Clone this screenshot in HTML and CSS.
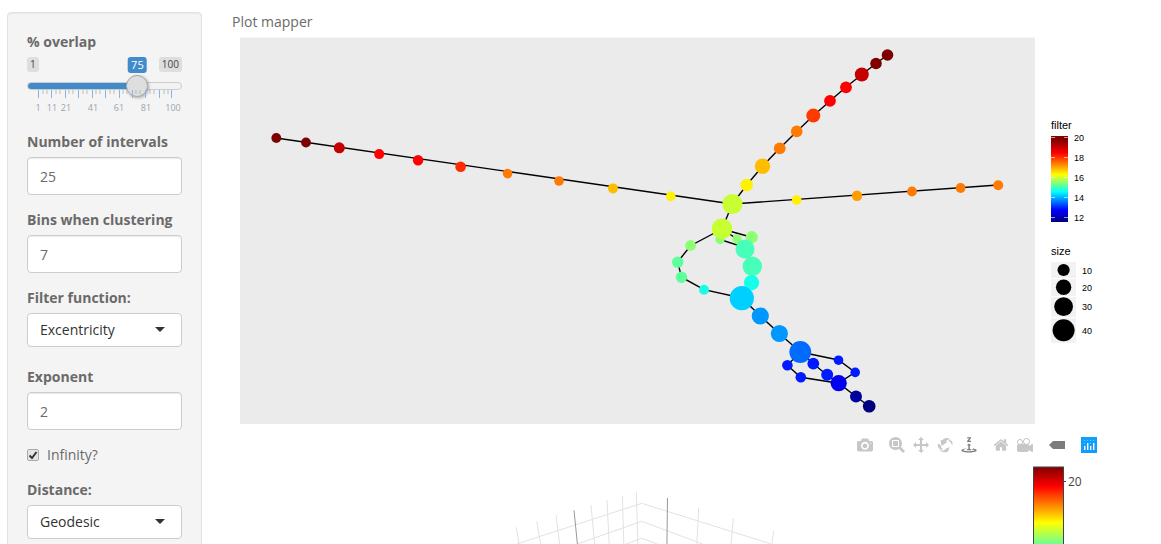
FILE: index.html
```html
<!DOCTYPE html>
<html lang="en">
<head>
<meta charset="utf-8">
<title>Plot mapper</title>
<link rel="stylesheet" href="styles.css">
</head>
<body>
<div class="page">
  <form class="sidebar">
    <div class="field">
      <label for="overlap">% overlap</label>
      <div class="slider">
        <div class="badges">
          <span class="badge">1</span>
          <output class="badge badge-value" for="overlap">75</output>
          <span class="badge">100</span>
        </div>
        <input class="range" id="overlap" type="range" min="1" max="100" value="75">
        <svg class="ticks" viewBox="0 0 155 27">
          <path class="tick-minor" d="M16 0v4M20 0v4M29 0v4M33 0v4M42 0v4M46 0v4M56 0v4M60 0v4M69 0v4M73 0v4M83 0v4M87 0v4M96 0v4M100 0v4M109 0v4M113 0v4M123 0v4M127 0v4M137 0v4M141 0v4" />
          <path class="tick-major" d="M11.500 0v8M24.500 0v8M38.500 0v8M51.500 0v8M65.500 0v8M78.500 0v8M92.500 0v8M105.500 0v8M118.500 0v8M132.500 0v8M144.500 0v8" />
          <g class="tick-text">
            <text x="11" y="21">1</text><text x="25" y="21">11</text><text x="39" y="21">21</text><text x="66" y="21">41</text><text x="92" y="21">61</text><text x="119" y="21">81</text><text x="146" y="21">100</text>
          </g>
        </svg>
      </div>
    </div>
    <div class="field">
      <label for="intervals">Number of intervals</label>
      <input class="text" id="intervals" type="text" inputmode="numeric" value="25">
    </div>
    <div class="field">
      <label for="bins">Bins when clustering</label>
      <input class="text" id="bins" type="text" inputmode="numeric" value="7">
    </div>
    <div class="field field-select">
      <label for="filter">Filter function:</label>
      <div class="select">
        <select id="filter"><option>Excentricity</option></select>
        <svg class="caret" viewBox="0 0 10 5"><path d="M0 0h10L5 5z"/></svg>
      </div>
    </div>
    <div class="field">
      <label for="exponent">Exponent</label>
      <input class="text" id="exponent" type="text" inputmode="numeric" value="2">
    </div>
    <div class="check">
      <span class="tickbox">
        <input id="infinity" type="checkbox" checked>
        <svg viewBox="0 0 12 12"><path d="M2.500 6.500l2.500 2.500L9.500 3" /></svg>
      </span>
      <label for="infinity">Infinity?</label>
    </div>
    <div class="field field-select">
      <label for="distance">Distance:</label>
      <div class="select">
        <select id="distance"><option>Geodesic</option></select>
        <svg class="caret" viewBox="0 0 10 5"><path d="M0 0h10L5 5z"/></svg>
      </div>
    </div>
  </form>

  <main class="main">
    <div class="title">Plot mapper</div>
    <svg class="chart" viewBox="232 32 921 401">
      <defs>
        <linearGradient id="jet" x1="0" y1="0" x2="0" y2="1">
          <stop offset="0" stop-color="#7f0000"/>
          <stop offset=".04" stop-color="#800000"/>
          <stop offset=".2" stop-color="#f00"/>
          <stop offset=".45" stop-color="#ff0"/>
          <stop offset=".65" stop-color="#0ff"/>
          <stop offset=".86" stop-color="#00f"/>
          <stop offset="1" stop-color="#00007f"/>
        </linearGradient>
      </defs>
      <rect x="240" y="37.500" width="795" height="386.500" fill="#ebebeb"/>
      <g class="edges">
        <path d="M276 138L732.300 204L998 185M887.500 55L876 63.500L862 74.500L846 87L830 101L813.300 115.700L796.700 131.500L779.700 148.300L762.500 166.300L746.700 185L732.300 204L722 229"/>
        <path d="M722 229L751.700 237.300L745 249M722 229L737 239L745 249M722 229L720 239.500L745 247.500L752.300 266.300L751.500 282.700L741.800 298"/>
        <path d="M722 229L690.500 245.700L677.700 262L681.500 277.200L704 289.700L741.800 298L760.300 316L779.300 333.500L800.300 352"/>
        <path d="M800.300 352L838.500 360L855 372.300L838.700 383.200M800.300 352L813.300 363.700L827 375L838.700 383.200M800.300 352L787.300 365.300L800.700 377.300L838.700 383.200L856 396.500L869 406.300"/>
      </g>
      <g fill="#7f0000"><circle cx="276.300" cy="138" r="4.900"/><circle cx="306" cy="142.500" r="4.900"/><circle cx="887.500" cy="55" r="5.800"/><circle cx="876" cy="63.500" r="5.800"/></g>
      <g fill="#c40000"><circle cx="339.300" cy="147.800" r="5.500"/><circle cx="861.800" cy="74.500" r="7"/></g>
      <g fill="#f00"><circle cx="379.200" cy="154.100" r="5"/><circle cx="418.100" cy="160.200" r="5.200"/><circle cx="846" cy="87.300" r="5.900"/><circle cx="830" cy="100.800" r="5.900"/></g>
      <g fill="#ff2c00"><circle cx="460.600" cy="166.700" r="5.300"/><circle cx="813.300" cy="115.600" r="7" fill="#ff3a00"/></g>
      <g fill="#ff7a00"><circle cx="507.600" cy="173.600" r="4.800"/><circle cx="559" cy="181" r="4.800"/><circle cx="796.700" cy="131.400" r="5.800"/><circle cx="779.700" cy="148.300" r="5.900"/><circle cx="912" cy="191.500" r="4.900"/><circle cx="960.600" cy="188" r="4.900"/><circle cx="998.200" cy="185.200" r="5"/></g>
      <circle cx="857" cy="195.700" r="5.200" fill="#ff9d00"/>
      <g fill="#ffbd00"><circle cx="613" cy="188.400" r="5"/><circle cx="762.500" cy="166.300" r="7.700"/></g>
      <g fill="#fff200"><circle cx="670.800" cy="196.400" r="4.800"/><circle cx="796.700" cy="200" r="4.800"/><circle cx="746.700" cy="185" r="6.300"/></g>
      <g fill="#8cff73"><circle cx="751.700" cy="237.200" r="6.100"/><circle cx="737" cy="239" r="4.700"/><circle cx="720" cy="239.500" r="4.700"/><circle cx="690.600" cy="245.500" r="5.400"/></g>
      <g fill="#c8ff32"><circle cx="732.400" cy="204" r="10.100"/><circle cx="722" cy="228.700" r="10.300"/></g>
      <g fill="#5cff9c"><circle cx="677.700" cy="262.100" r="5.700"/><circle cx="681.500" cy="277.200" r="5.700"/></g>
      <g fill="#46ffb8"><circle cx="745" cy="249" r="9.500"/><circle cx="752.300" cy="266.300" r="9.700"/></g>
      <g fill="#17ffe8"><circle cx="751.500" cy="282.700" r="7.600"/><circle cx="704" cy="289.700" r="5"/></g>
      <circle cx="741.800" cy="298.200" r="12.100" fill="#00d0ff"/>
      <g fill="#0098ff"><circle cx="760.300" cy="316" r="8.600"/><circle cx="779.400" cy="333.500" r="8.600"/></g>
      <circle cx="800.300" cy="352" r="10.900" fill="#006cff"/>
      <g fill="#001bff"><circle cx="787.400" cy="365.200" r="5.300"/><circle cx="800.800" cy="377.300" r="5.300"/><circle cx="813.300" cy="363.600" r="5.900"/><circle cx="827.200" cy="374.800" r="6"/><circle cx="838.500" cy="360.200" r="4.800"/><circle cx="855.200" cy="372.400" r="4.800"/></g>
      <circle cx="838.700" cy="383.200" r="8.100" fill="#0000f0"/>
      <circle cx="856" cy="396.400" r="6" fill="#0000a0"/>
      <circle cx="869.200" cy="406.300" r="6.300" fill="#00007f"/>

      <text class="legend-title" x="1051" y="129">filter</text>
      <rect x="1051" y="136" width="17" height="86" fill="url(#jet)"/>
      <path class="legend-ticks" d="M1051 137.500h4M1064 137.500h4M1051 157.500h4M1064 157.500h4M1051 177.500h4M1064 177.500h4M1051 197.500h4M1064 197.500h4M1051 217.500h4M1064 217.500h4"/>
      <g class="legend-text">
        <text x="1074" y="141">20</text><text x="1074" y="161">18</text><text x="1074" y="181">16</text><text x="1074" y="201">14</text><text x="1074" y="221">12</text>
      </g>
      <text class="legend-title" x="1051" y="255">size</text>
      <g fill="#f2f2f2"><rect x="1051" y="262" width="25" height="16"/><rect x="1051" y="279" width="25" height="17"/><rect x="1051" y="297" width="25" height="20"/><rect x="1051" y="318" width="25" height="25"/></g>
      <circle cx="1063.600" cy="270" r="6.100"/><circle cx="1063.600" cy="287.300" r="7.700"/><circle cx="1063.600" cy="306.600" r="9.400"/><circle cx="1063.600" cy="330.200" r="11"/>
      <g class="legend-text">
        <text x="1082" y="274">10</text><text x="1082" y="291">20</text><text x="1082" y="310">30</text><text x="1082" y="334">40</text>
      </g>
    </svg>

    <div class="modebar">
      <div class="group">
        <button type="button" aria-label="Download plot"><svg viewBox="0 0 1000 1000"><path transform="matrix(1 0 0 -1 0 850)" d="m500 450c-83 0-150-67-150-150 0-83 67-150 150-150 83 0 150 67 150 150 0 83-67 150-150 150z m400 150h-120c-16 0-34 13-39 29l-31 93c-6 15-23 28-40 28h-340c-16 0-34-13-39-28l-31-94c-6-15-23-28-40-28h-120c-55 0-100-45-100-100v-450c0-55 45-100 100-100h800c55 0 100 45 100 100v450c0 55-45 100-100 100z m-400-550c-138 0-250 112-250 250 0 138 112 250 250 250 138 0 250-112 250-250 0-138-112-250-250-250z m365 380c-19 0-35 16-35 35 0 19 16 35 35 35 19 0 35-16 35-35 0-19-16-35-35-35z"/></svg></button>
      </div>
      <div class="group">
        <button type="button" aria-label="Zoom"><svg viewBox="0 0 1000 1000"><path transform="matrix(1 0 0 -1 0 850)" d="m1000-25l-250 251c40 63 63 138 63 218 0 224-182 406-407 406-224 0-406-182-406-406s183-406 407-406c80 0 155 22 218 62l250-250 125 125z m-812 250l0 438 437 0 0-438-437 0z m62 375l313 0 0-312-313 0 0 312z"/></svg></button>
        <button type="button" aria-label="Pan"><svg viewBox="0 0 1000 1000"><path transform="matrix(1 0 0 -1 0 850)" d="m1000 350l-187 188 0-125-250 0 0 250 125 0-188 187-187-187 125 0 0-250-250 0 0 125-188-188 186-187 0 125 252 0 0-250-125 0 187-188 188 188-125 0 0 250 250 0 0-126 187 188z"/></svg></button>
        <button type="button" aria-label="Orbital rotation"><svg viewBox="0 0 1000 1000"><path transform="matrix(1 0 0 -1 0 850)" d="m922 660c-5 4-9 7-14 11-359 263-580-31-580-31l-102 28 58-400c0 1 1 1 2 2 118 108 351 249 351 249s-62 27-100 42c88 83 222 183 347 122 16-8 30-17 44-27-2 1-4 2-6 4z m36-329c0 0 64 229-88 296-62 27-124 14-175-11 157-78 225-208 249-266 8-19 11-31 11-31 2 5 6 15 11 32-5-13-8-20-8-20z m-775-239c70-31 117-50 198-32-121 80-199 346-199 346l-96-15-58-12c0 0 55-226 155-287z m603 133l-317-139c0 0 4-4 19-14 7-5 24-15 24-15s-177-147-389 4c235-287 536-112 536-112l31-22 100 299-4-1z m-298-153c6-4 14-9 24-15 0 0-17 10-24 15z"/></svg></button>
        <button type="button" class="active" aria-label="Turntable rotation"><svg viewBox="0 0 1000 1000"><path transform="matrix(1 0 0 -1 0 850)" d="m833 5l-17 108v41l-130-65 130-66c0 0 0 38 0 39 0-1 36-14 39-25 4-15-6-22-16-30-15-12-39-16-56-20-90-22-187-23-279-23-261 0-341 34-353 59 3 60 228 110 228 110-140-8-351-35-351-116 0-120 293-142 474-142 155 0 477 22 477 142 0 50-74 79-163 96z m-374 94c-58-5-99-21-99-40 0-24 65-43 144-43 79 0 143 19 143 43 0 19-42 34-98 40v216h87l-132 135-133-135h88v-216z m167 515h-136v1c16 16 31 34 46 52l84 109v54h-230v-71h124v-1c-16-17-28-32-44-51l-89-114v-51h245v72z"/></svg></button>
      </div>
      <div class="group">
        <button type="button" aria-label="Reset camera"><svg viewBox="0 0 929 1000"><path transform="matrix(1 0 0 -1 0 850)" d="m786 296v-267q0-15-11-26t-25-10h-214v214h-143v-214h-214q-15 0-25 10t-11 26v267q0 1 0 2t0 2l321 264 321-264q1-1 1-4z m124 39l-34-41q-5-5-12-6h-2q-7 0-12 3l-386 322-386-322q-7-4-13-4-7 2-12 7l-35 41q-4 5-3 13t6 12l401 334q18 15 42 15t43-15l136-114v109q0 8 5 13t13 5h107q8 0 13-5t5-13v-227l122-102q5-5 6-12t-4-13z"/></svg></button>
        <button type="button" aria-label="Reset camera to last save"><svg viewBox="0 0 1000 1000"><path transform="matrix(1 0 0 -1 0 850)" d="m938 413l-188-125c0 37-17 71-44 94 64 38 107 107 107 187 0 121-98 219-219 219-121 0-219-98-219-219 0-61 25-117 66-156h-115c30 33 49 76 49 125 0 103-84 187-187 187s-188-84-188-187c0-57 26-107 65-141-38-22-65-62-65-109v-250c0-70 56-126 125-126h500c69 0 125 56 125 126l188-126c34 0 62 28 62 63v375c0 35-28 63-62 63z m-750 0c-69 0-125 56-125 125s56 125 125 125 125-56 125-125-56-125-125-125z m406-1c-87 0-157 70-157 157 0 86 70 156 157 156s156-70 156-156-70-157-156-157z"/></svg></button>
      </div>
      <div class="group">
        <button type="button" class="active" aria-label="Toggle hover"><svg viewBox="0 0 1500 1000"><path transform="matrix(1 0 0 -1 0 850)" d="m375 725l0 0-375-375 375-374 0-1 1125 0 0 750-1125 0z"/></svg></button>
      </div>
      <div class="group">
        <a href="#" aria-label="Plot library home"><svg viewBox="0 0 16 16"><path fill="#119dff" d="M0 0h16v16H0z"/><path fill="#fff" d="M3 9h1.400v4H3zM6 6h1.400v7H6zM9 9h1.400v4H9zM12 6h1.400v7H12z"/><path fill="#25fefd" opacity=".75" d="M3 3h1.200v1H3zM6 3h1.200v1H6zM9 3h1.200v1H9zM12 3h1.200v1H12zM3 6h1.200v1H3zM9 6h1.200v1H9z"/></svg></a>
      </div>
    </div>

    <svg class="scene" viewBox="232 460 921 170">
      <defs>
        <linearGradient id="scale" x1="0" y1="0" x2="0" y2="1">
          <stop offset="0" stop-color="#800000"/>
          <stop offset=".125" stop-color="#f00"/>
          <stop offset=".36" stop-color="#ff0"/>
          <stop offset=".6" stop-color="#0ff"/>
          <stop offset=".86" stop-color="#00f"/>
          <stop offset="1" stop-color="#000080"/>
        </linearGradient>
      </defs>
      <g class="grid">
        <path d="M516.300 527.300L525 580M536.700 521.300L547 580M556 515.300L564 580M591 505.300L598 580M607 500.300L611 580M622.300 496L625 580M636.300 491.700L639 580M698.700 507.700L695 580M733.300 518.300L728 580M773.700 531L767 580"/>
        <path d="M516.700 544L641.700 503.300L771.300 544M577.300 544L641.700 521.300L702.700 544M604 552L641.700 538.300L679 552"/>
      </g>
      <path class="axes" d="M574 510.300L581 580M667.500 498L666.500 580"/>
      <rect x="1033.500" y="467" width="30" height="155" fill="url(#scale)" stroke="#444"/>
      <path d="M1064 481.500h2" stroke="#444"/>
      <text class="scale-text" x="1068" y="486">20</text>
    </svg>
  </main>
</div>
</body>
</html>
```
FILE: styles.css
```css
* { box-sizing: border-box; }

body {
  margin: 0;
  height: 100vh;
  overflow: hidden;
  background: #fff;
  color: #6a6a6a;
  font: 14px/20px "Open Sans", "Noto Sans", sans-serif;
}

svg { display: block; }

.page {
  display: flex;
  align-items: flex-start;
  gap: 30px;
  padding: 12px 8px 0 7px;
}

.sidebar {
  flex: 0 0 195px;
  padding: 19px;
  background: #f4f4f4;
  border: 1px solid #e2e2e2;
  border-radius: 4px;
  box-shadow: inset 0 1px 1px rgba(0, 0, 0, .05);
}

.field { margin-bottom: 15px; }
.field-select { margin-bottom: 20px; }

.field > label {
  display: block;
  margin-bottom: 5px;
  font-weight: 700;
}

.text,
.select select {
  display: block;
  width: 100%;
  padding: 0 12px;
  border: 1px solid #ccc;
  border-radius: 4px;
  background: #fff;
  font: inherit;
}

.text {
  height: 38px;
  color: #6a6a6a;
  box-shadow: inset 0 1px 1px rgba(0, 0, 0, .08);
}

.select { position: relative; }

.select select {
  height: 34px;
  color: #333;
  appearance: none;
}

.caret {
  position: absolute;
  top: 14px;
  right: 17px;
  width: 10px;
  fill: #333;
  pointer-events: none;
}

.check {
  display: flex;
  align-items: center;
  gap: 8px;
  margin-bottom: 15px;
}

.tickbox {
  position: relative;
  width: 12px;
  height: 12px;
}

.tickbox input {
  display: block;
  width: 12px;
  height: 12px;
  margin: 0;
  appearance: none;
  border: 1px solid #aaa;
  border-radius: 2px;
  background: #e4e4e4;
}

.tickbox svg {
  position: absolute;
  inset: 0;
  fill: none;
  stroke: #333;
  stroke-width: 2;
  pointer-events: none;
}

.tickbox input:not(:checked) + svg { display: none; }

/* Slider */
.slider { height: 60px; }

.badges {
  position: relative;
  display: flex;
  justify-content: space-between;
  align-items: flex-start;
  height: 25px;
}

.badge {
  padding: 0 3px;
  border-radius: 3px;
  background: #dedede;
  color: #444;
  font-size: 10px;
  line-height: 15px;
}

.badge-value {
  position: absolute;
  left: calc(11px + (100% - 22px) * .7475);
  transform: translateX(-50%);
  background: #428bca;
  color: #fff;
  font-size: 11px;
  line-height: 16px;
}

.range {
  display: block;
  width: 100%;
  height: 8px;
  margin: 0;
  appearance: none;
  border: 1px solid #ccc;
  border-radius: 5px;
  background: linear-gradient(90deg, #428bca 72%, #f2f2f2 72%);
  background-origin: border-box;
}

.range::-webkit-slider-thumb {
  appearance: none;
  width: 22px;
  height: 22px;
  border: 1px solid #aaa;
  border-radius: 50%;
  background: #dedede;
  box-shadow: 1px 1px 3px rgba(0, 0, 0, .3);
}

.ticks { width: 100%; }
.tick-minor { stroke: #bbb; }
.tick-major { stroke: #82b6e6; }

.tick-text {
  fill: #9aa5ad;
  font-size: 9px;
  text-anchor: middle;
}

/* Plots */
.main {
  flex: 1;
  min-width: 0;
}

.chart,
.scene { width: 100%; }

.edges {
  fill: none;
  stroke: #000;
  stroke-width: 1.400;
}

.legend-title { font: 11px "Liberation Sans", sans-serif; }
.legend-text { font: 9px "Liberation Sans", sans-serif; }
.legend-ticks { stroke: #fff; stroke-width: .6; }

.modebar {
  display: flex;
  justify-content: flex-end;
  gap: 8px;
  padding-right: 52px;
  margin-bottom: 3px;
}

.group { display: flex; }

.modebar button,
.modebar a {
  display: block;
  padding: 4px;
  border: 0;
  background: none;
  fill: #c7c7c7;
}

.modebar .active { fill: #7c7c7c; }

.modebar svg {
  width: 16px;
  height: 16px;
}

.grid { fill: none; stroke: #e2e2e2; }
.axes { fill: none; stroke: #999; }
.scale-text { fill: #444; font-size: 12px; }
```
